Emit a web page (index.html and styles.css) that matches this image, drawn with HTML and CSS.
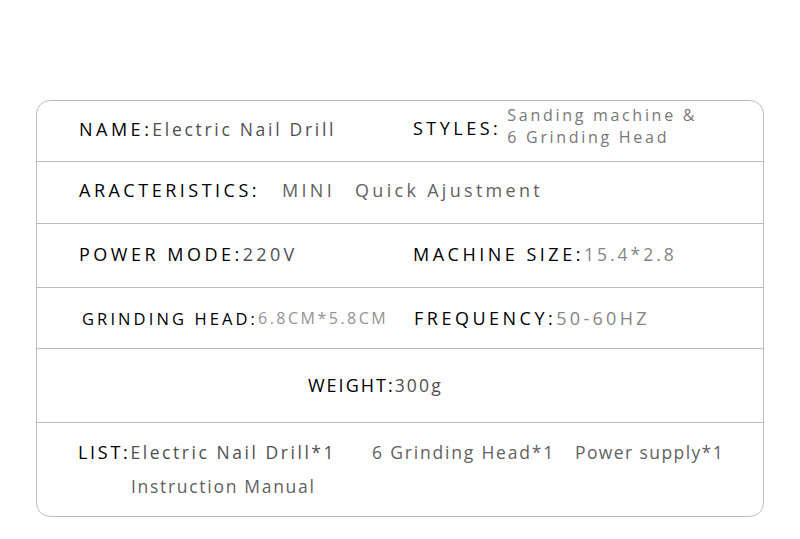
FILE: index.html
```html
<!DOCTYPE html>
<html>
<head>
<meta charset="utf-8">
<link rel="stylesheet" href="styles.css">
</head>
<body>
<div class="table">
  <div class="row r1">
    <div class="cell c-left"><span class="lbl">NAME:</span><span class="val v-dark">Electric Nail Drill</span></div>
    <div class="cell c-right styles"><span class="lbl">STYLES:</span><span class="val v-mid stack">Sanding machine &amp;<br>6 Grinding Head</span></div>
  </div>
  <div class="row r2">
    <div class="cell c-left"><span class="lbl">ARACTERISTICS:</span><span class="val v-mid big gap1">MINI</span><span class="val v-mid big gap2">Quick Ajustment</span></div>
  </div>
  <div class="row r3">
    <div class="cell c-left"><span class="lbl">POWER MODE:</span><span class="val v-dark big">220V</span></div>
    <div class="cell c-right"><span class="lbl">MACHINE SIZE:</span><span class="val v-light msize">15.4*2.8</span></div>
  </div>
  <div class="row r4">
    <div class="cell c-left small"><span class="lbl">GRINDING HEAD:</span><span class="val v-lighter">6.8CM*5.8CM</span></div>
    <div class="cell c-right"><span class="lbl">FREQUENCY:</span><span class="val v-light freq">50-60HZ</span></div>
  </div>
  <div class="row r5">
    <div class="cell c-weight"><span class="lbl">WEIGHT:</span><span class="val v-dark">300g</span></div>
  </div>
  <div class="row r6">
    <div class="list-line"><span class="lbl">LIST:</span><span class="val v-dark lv">Electric Nail Drill*1</span><span class="val v-mid li2">6 Grinding Head*1</span><span class="val v-mid li3">Power supply*1</span></div>
    <div class="list-line second"><span class="val v-mid manual">Instruction Manual</span></div>
  </div>
</div>
</body>
</html>
```
FILE: styles.css
```css
html, body {
  margin: 0;
  padding: 0;
  background: #ffffff;
}
body {
  font-family: "Open Sans", "Noto Sans", sans-serif;
  width: 800px;
  height: 539px;
  padding-top: 100px;
  box-sizing: border-box;
}
.table {
  margin-left: 36px;
  width: 728px;
  height: 417px;
  box-sizing: border-box;
  border: 1px solid #bdbdbd;
  border-radius: 14px;
  display: flex;
  flex-direction: column;
}
.row {
  display: flex;
  align-items: center;
  border-bottom: 1px solid #bdbdbd;
  box-sizing: border-box;
}
.row:last-child { border-bottom: none; }
.r1 { height: 61px; }
.r2 { height: 62px; }
.r3 { height: 64px; }
.r4 { height: 61px; }
.r5 { height: 74px; }
.r6 {
  flex: 1;
  flex-direction: column;
  align-items: flex-start;
  justify-content: flex-start;
  padding-top: 17px;
}
.cell {
  display: flex;
  align-items: center;
  white-space: nowrap;
}
.c-left {
  width: 376px;
  padding-left: 42px;
  box-sizing: border-box;
  margin-top: -5px;
}
.c-right { margin-top: -5px; }
.r2 .c-left { margin-top: -6px; }
.r3 .c-left, .r3 .c-right { margin-top: -4px; }
.r3 .c-left .lbl { letter-spacing: 3.5px; }
.r4 .c-left { padding-left: 45px; margin-top: 0; }
.r4 .c-right { margin-top: 0; padding-left: 1px; }
.c-weight { padding-left: 271px; margin-top: -1px; }
.lbl {
  font-size: 18px;
  font-weight: 500;
  color: #000;
  letter-spacing: 3.5px;
}
.val {
  font-size: 17.5px;
  letter-spacing: 2.7px;
}
.big { font-size: 18px; letter-spacing: 3.3px; }
.msize { letter-spacing: 3px; }
.freq { font-size: 18px; letter-spacing: 3.3px; }
.small .lbl { font-size: 16.5px; letter-spacing: 3.1px; }
.small .val { font-size: 16px; letter-spacing: 2.5px; }
.c-weight .lbl { letter-spacing: 2px; }
.c-weight .val { letter-spacing: 2.2px; }
.v-dark { color: #4f4f4f; }
.v-mid { color: #626262; }
.v-light { color: #858585; }
.v-lighter { color: #939393; }
.styles { margin-top: -6px; }
.stack {
  display: inline-block;
  font-size: 16px;
  line-height: 22px;
  letter-spacing: 2.7px;
  margin-left: 6px;
  margin-top: -4px;
  color: #777;
}
.gap1 { margin-left: 22px; }
.gap2 { margin-left: 20px; }
.list-line {
  padding-left: 41px;
  white-space: nowrap;
}
.list-line .lbl { letter-spacing: 2.7px; }
.lv { letter-spacing: 2.55px; }
.li2 { margin-left: 36px; letter-spacing: 1.8px; }
.li3 { margin-left: 20px; letter-spacing: 1.4px; }
.manual { letter-spacing: 1.7px; }
.second { padding-left: 94px; margin-top: 10px; }
```
